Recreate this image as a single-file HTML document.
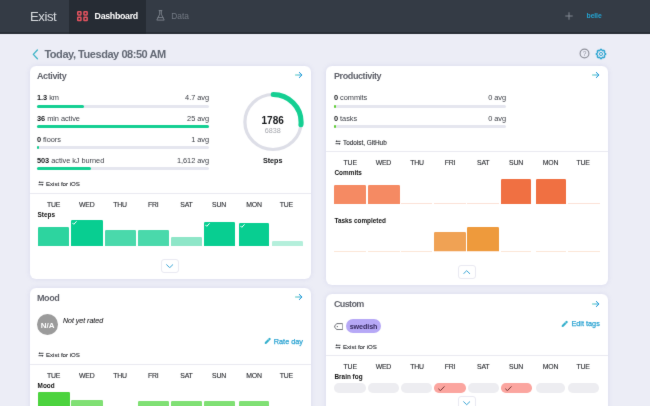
<!DOCTYPE html>
<html lang="en"><head><meta charset="utf-8"><title>Exist - Dashboard</title>
<style>
html,body{margin:0;padding:0;}
body{width:650px;height:406px;overflow:hidden;position:relative;background:#ecedf6;font-family:"Liberation Sans", sans-serif;-webkit-font-smoothing:antialiased;}
div,svg{position:absolute;}
b{font-weight:bold;}
</style></head><body>
<svg width="0" height="0" style="left:0;top:0"><defs><filter id="soft" x="0" y="0" width="100%" height="100%" color-interpolation-filters="sRGB"><feConvolveMatrix order="3" kernelMatrix="0.01 0.06 0.01 0.06 0.72 0.06 0.01 0.06 0.01" divisor="1" edgeMode="duplicate" preserveAlpha="false"/></filter></defs></svg>
<div id="w" style="left:-10px;top:-10px;width:670px;height:426px;filter:url(#soft);"><div id="p" style="left:10px;top:10px;width:650px;height:406px;">
<div style="position:absolute;left:-10.00px;top:-10.00px;width:670.00px;height:43.70px;background:#282e36;"></div>
<div style="position:absolute;left:-10.00px;top:-10.00px;width:670.00px;height:42.10px;background:#343b45;"></div>
<div style="position:absolute;left:69.20px;top:-10.00px;width:76.80px;height:43.70px;background:#21262d;"></div>
<div style="position:absolute;left:69.20px;top:-10.00px;width:76.80px;height:42.10px;background:#262c34;"></div>
<div style="top:9px;font-size:13.2px;line-height:15px;color:#d9dce0;white-space:nowrap;letter-spacing:-0.45px;left:30.00px;">Exist</div>
<svg style="position:absolute;left:77.40px;top:10.60px" width="11" height="11" viewBox="0 0 11 11"><rect x="0.75" y="0.75" width="3.2" height="3.2" rx="0.4" fill="none" stroke="#e5535f" stroke-width="1.5"/><rect x="6.95" y="0.75" width="3.2" height="3.2" rx="0.4" fill="none" stroke="#e5535f" stroke-width="1.5"/><rect x="0.75" y="6.35" width="3.2" height="3.2" rx="0.4" fill="none" stroke="#e5535f" stroke-width="1.5"/><rect x="6.95" y="6.35" width="3.2" height="3.2" rx="0.4" fill="none" stroke="#e5535f" stroke-width="1.5"/></svg>
<div style="top:11px;font-size:8.8px;line-height:10px;color:#fff;white-space:nowrap;font-weight:bold;letter-spacing:-0.3px;left:94.60px;">Dashboard</div>
<svg style="position:absolute;left:155.60px;top:10.00px" width="9" height="11" viewBox="0 0 9 11"><path d="M3.1 0.6h2.8M3.7 0.6v3.6L0.8 10.1h7.4L5.3 4.2V0.6M2 7.6h5" fill="none" stroke="#7f868f" stroke-width="0.9" stroke-linejoin="round" stroke-linecap="round"/></svg>
<div style="top:11px;font-size:8.4px;line-height:10px;color:#747b85;white-space:nowrap;left:171.20px;">Data</div>
<svg style="position:absolute;left:565.30px;top:11.70px" width="8" height="8" viewBox="0 0 8 8"><path d="M4 0.3v7.4M0.3 4h7.4" stroke="#8a9099" stroke-width="0.9" fill="none"/></svg>
<div style="top:12px;font-size:6.8px;line-height:7px;color:#24a4d2;white-space:nowrap;font-weight:bold;letter-spacing:-0.1px;left:586.60px;">belle</div>
<svg style="position:absolute;left:32.00px;top:48.60px" width="7" height="11" viewBox="0 0 7 11"><path d="M5.4 1L1.3 5.4L5.4 9.8" fill="none" stroke="#3db3c6" stroke-width="1.3" stroke-linecap="round" stroke-linejoin="round"/></svg>
<div style="top:48px;font-size:11px;line-height:12px;color:#626874;white-space:nowrap;font-weight:bold;letter-spacing:-0.45px;left:44.40px;">Today, Tuesday 08:50 AM</div>
<svg style="position:absolute;left:579.30px;top:48.30px" width="11" height="11" viewBox="0 0 11 11"><circle cx="5.5" cy="5.5" r="4.4" fill="none" stroke="#8f919b" stroke-width="1.15"/><text x="5.5" y="7.9" font-size="6.6" text-anchor="middle" fill="#8d8f99" font-family="Liberation Sans, sans-serif">?</text></svg>
<svg style="position:absolute;left:595.40px;top:47.70px" width="12" height="12" viewBox="0 0 12 12"><path d="M10.64 5.26L10.64 6.74L9.58 6.92L9.18 7.88L9.80 8.76L8.76 9.80L7.88 9.18L6.92 9.58L6.74 10.64L5.26 10.64L5.08 9.58L4.12 9.18L3.24 9.80L2.20 8.76L2.82 7.88L2.42 6.92L1.36 6.74L1.36 5.26L2.42 5.08L2.82 4.12L2.20 3.24L3.24 2.20L4.12 2.82L5.08 2.42L5.26 1.36L6.74 1.36L6.92 2.42L7.88 2.82L8.76 2.20L9.80 3.24L9.18 4.12L9.58 5.08Z" fill="none" stroke="#2ea5d1" stroke-width="1.25" stroke-linejoin="round"/><circle cx="6" cy="6" r="1.55" fill="none" stroke="#2ea5d1" stroke-width="0.95"/></svg>
<div style="position:absolute;left:30.00px;top:66.00px;width:281.00px;height:212.60px;background:#fff;border-radius:6px;box-shadow:0 0 5px rgba(120,120,190,0.16);"></div>
<div style="top:71px;font-size:9.0px;line-height:10px;color:#5e6069;white-space:nowrap;font-weight:bold;letter-spacing:-0.4px;left:37.00px;">Activity</div>
<svg style="position:absolute;left:294.90px;top:70.90px" width="8" height="8" viewBox="0 0 8 8"><defs><linearGradient id="ag" x1="0" x2="1" y1="0" y2="0"><stop offset="0" stop-color="#45c7b6"/><stop offset="0.7" stop-color="#2aa2d6"/></linearGradient></defs><path d="M0.5 4h6.2M4.3 1.4L7 4L4.3 6.6" fill="none" stroke="url(#ag)" stroke-width="0.95" stroke-linecap="round" stroke-linejoin="round"/><path d="M4.3 1.4L7 4L4.3 6.6" fill="none" stroke="#2a9fd8" stroke-width="0.95" stroke-linecap="round" stroke-linejoin="round"/></svg>
<div style="top:93px;font-size:7.4px;line-height:9px;color:#3e4148;white-space:nowrap;letter-spacing:-0.05px;left:37.00px;"><b style="color:#15171a">1.3</b> km</div>
<div style="top:93px;font-size:7.4px;line-height:9px;color:#3e4148;white-space:nowrap;letter-spacing:-0.05px;right:441.00px;">4.7 avg</div>
<div style="position:absolute;left:37.00px;top:104.50px;width:172.00px;height:3.00px;background:#e5e6ef;border-radius:1.5px;"></div>
<div style="position:absolute;left:37.00px;top:104.50px;width:47.13px;height:3.00px;background:#14cf92;border-radius:1.5px;"></div>
<div style="top:114px;font-size:7.4px;line-height:9px;color:#3e4148;white-space:nowrap;letter-spacing:-0.05px;left:37.00px;"><b style="color:#15171a">36</b> min active</div>
<div style="top:114px;font-size:7.4px;line-height:9px;color:#3e4148;white-space:nowrap;letter-spacing:-0.05px;right:441.00px;">25 avg</div>
<div style="position:absolute;left:37.00px;top:125.10px;width:172.00px;height:3.00px;background:#e5e6ef;border-radius:1.5px;"></div>
<div style="position:absolute;left:37.00px;top:125.10px;width:172.00px;height:3.00px;background:#14cf92;border-radius:1.5px;"></div>
<div style="top:135px;font-size:7.4px;line-height:9px;color:#3e4148;white-space:nowrap;letter-spacing:-0.05px;left:37.00px;"><b style="color:#15171a">0</b> floors</div>
<div style="top:135px;font-size:7.4px;line-height:9px;color:#3e4148;white-space:nowrap;letter-spacing:-0.05px;right:441.00px;">1 avg</div>
<div style="position:absolute;left:37.00px;top:145.90px;width:172.00px;height:3.00px;background:#e5e6ef;border-radius:1.5px;"></div>
<div style="position:absolute;left:37.00px;top:145.90px;width:2.20px;height:3.00px;background:#14cf92;border-radius:1.5px;"></div>
<div style="top:156px;font-size:7.4px;line-height:9px;color:#3e4148;white-space:nowrap;letter-spacing:-0.05px;left:37.00px;"><b style="color:#15171a">503</b> active kJ burned</div>
<div style="top:156px;font-size:7.4px;line-height:9px;color:#3e4148;white-space:nowrap;letter-spacing:-0.05px;right:441.00px;">1,612 avg</div>
<div style="position:absolute;left:37.00px;top:167.10px;width:172.00px;height:3.00px;background:#e5e6ef;border-radius:1.5px;"></div>
<div style="position:absolute;left:37.00px;top:167.10px;width:53.84px;height:3.00px;background:#14cf92;border-radius:1.5px;"></div>
<svg style="position:absolute;left:237.70px;top:87.30px" width="70" height="70" viewBox="0 0 70 70"><g transform="translate(35 35) scale(1.022 1) translate(-35 -35)"><circle cx="35" cy="35" r="27.5" fill="none" stroke="#dddee7" stroke-width="3.2"/><circle cx="35" cy="35" r="27.5" fill="none" stroke="#14cf92" stroke-width="5" stroke-linecap="round" stroke-dasharray="45.73 172.79" transform="rotate(-89.5 35 35)"/></g></svg>
<div style="top:115px;font-size:10px;line-height:11px;color:#15171a;white-space:nowrap;font-weight:bold;left:172.70px;width:200px;text-align:center;">1786</div>
<div style="top:126px;font-size:7.2px;line-height:9px;color:#a5a7ad;white-space:nowrap;left:172.70px;width:200px;text-align:center;">6838</div>
<div style="top:156px;font-size:7.2px;line-height:9px;color:#15171a;white-space:nowrap;font-weight:bold;left:172.70px;width:200px;text-align:center;">Steps</div>
<svg style="position:absolute;left:37.80px;top:181.30px" width="6" height="5" viewBox="0 0 6 5"><path d="M1.6 1.3h3.9M0.5 3.7h3.9" fill="none" stroke="#2b2d33" stroke-width="0.85"/><path d="M0.4 1.3L2 0.3V2.3Z M5.6 3.7L4 2.7V4.7Z" fill="#2b2d33"/></svg>
<div style="top:180px;font-size:6.1px;line-height:7px;color:#26282d;white-space:nowrap;left:46.00px;-webkit-text-stroke:0.1px #26282d;">Exist for iOS</div>
<div style="position:absolute;left:30.00px;top:193.20px;width:281.00px;height:0.80px;background:#e9eaf1;"></div>
<div style="top:201px;font-size:6.9px;line-height:7px;color:#2c2e33;white-space:nowrap;letter-spacing:-0.2px;left:-46.40px;width:200px;text-align:center;-webkit-text-stroke:0.12px #2c2e33;">TUE</div>
<div style="top:201px;font-size:6.9px;line-height:7px;color:#2c2e33;white-space:nowrap;letter-spacing:-0.2px;left:-13.20px;width:200px;text-align:center;-webkit-text-stroke:0.12px #2c2e33;">WED</div>
<div style="top:201px;font-size:6.9px;line-height:7px;color:#2c2e33;white-space:nowrap;letter-spacing:-0.2px;left:20.00px;width:200px;text-align:center;-webkit-text-stroke:0.12px #2c2e33;">THU</div>
<div style="top:201px;font-size:6.9px;line-height:7px;color:#2c2e33;white-space:nowrap;letter-spacing:-0.2px;left:53.30px;width:200px;text-align:center;-webkit-text-stroke:0.12px #2c2e33;">FRI</div>
<div style="top:201px;font-size:6.9px;line-height:7px;color:#2c2e33;white-space:nowrap;letter-spacing:-0.2px;left:86.40px;width:200px;text-align:center;-webkit-text-stroke:0.12px #2c2e33;">SAT</div>
<div style="top:201px;font-size:6.9px;line-height:7px;color:#2c2e33;white-space:nowrap;letter-spacing:-0.2px;left:119.00px;width:200px;text-align:center;-webkit-text-stroke:0.12px #2c2e33;">SUN</div>
<div style="top:201px;font-size:6.9px;line-height:7px;color:#2c2e33;white-space:nowrap;letter-spacing:-0.2px;left:154.00px;width:200px;text-align:center;-webkit-text-stroke:0.12px #2c2e33;">MON</div>
<div style="top:201px;font-size:6.9px;line-height:7px;color:#2c2e33;white-space:nowrap;letter-spacing:-0.2px;left:186.30px;width:200px;text-align:center;-webkit-text-stroke:0.12px #2c2e33;">TUE</div>
<div style="top:211px;font-size:6.4px;line-height:7px;color:#111;white-space:nowrap;font-weight:bold;left:37.60px;">Steps</div>
<div style="position:absolute;left:37.60px;top:227.00px;width:31.40px;height:18.60px;background:#2dd49f;border-radius:1.2px 1.2px 0 0;"></div>
<div style="position:absolute;left:71.00px;top:220.00px;width:32.00px;height:25.60px;background:#08ce91;border-radius:1.2px 1.2px 0 0;"></div>
<div style="position:absolute;left:104.60px;top:229.60px;width:31.40px;height:16.00px;background:#4ad9ab;border-radius:1.2px 1.2px 0 0;"></div>
<div style="position:absolute;left:137.90px;top:229.70px;width:31.60px;height:15.90px;background:#4ad9ab;border-radius:1.2px 1.2px 0 0;"></div>
<div style="position:absolute;left:170.90px;top:236.70px;width:31.60px;height:8.90px;background:#8ee6c8;border-radius:1.2px 1.2px 0 0;"></div>
<div style="position:absolute;left:204.00px;top:222.00px;width:30.70px;height:23.60px;background:#08ce91;border-radius:1.2px 1.2px 0 0;"></div>
<div style="position:absolute;left:239.00px;top:222.60px;width:30.20px;height:23.00px;background:#08ce91;border-radius:1.2px 1.2px 0 0;"></div>
<div style="position:absolute;left:271.50px;top:240.80px;width:31.00px;height:4.80px;background:#b4efdb;border-radius:1.2px 1.2px 0 0;"></div>
<svg style="position:absolute;left:72.00px;top:221.30px" width="5" height="4" viewBox="0 0 5 4"><path d="M0.6 2.1L1.8 3.3L4.3 0.6" fill="none" stroke="#fff" stroke-width="1.0" stroke-linecap="round" stroke-linejoin="round"/></svg>
<svg style="position:absolute;left:205.00px;top:223.30px" width="5" height="4" viewBox="0 0 5 4"><path d="M0.6 2.1L1.8 3.3L4.3 0.6" fill="none" stroke="#fff" stroke-width="1.0" stroke-linecap="round" stroke-linejoin="round"/></svg>
<svg style="position:absolute;left:240.00px;top:223.90px" width="5" height="4" viewBox="0 0 5 4"><path d="M0.6 2.1L1.8 3.3L4.3 0.6" fill="none" stroke="#fff" stroke-width="1.0" stroke-linecap="round" stroke-linejoin="round"/></svg>
<div style="position:absolute;left:161.00px;top:259.10px;width:18.00px;height:13.60px;background:#fff;border:0.8px solid #e9e9f2;border-radius:3px;box-sizing:border-box;"></div>
<svg style="position:absolute;left:166.30px;top:264.10px" width="7.4" height="4.4" viewBox="0 0 7.4 4.4"><path d="M0.6 0.7L3.7 3.7L6.8 0.7" fill="none" stroke="#2d9fd2" stroke-width="0.95" stroke-linecap="round" stroke-linejoin="round"/></svg>
<div style="position:absolute;left:326.00px;top:66.00px;width:282.00px;height:218.80px;background:#fff;border-radius:6px;box-shadow:0 0 5px rgba(120,120,190,0.16);"></div>
<div style="top:71px;font-size:9.0px;line-height:10px;color:#5e6069;white-space:nowrap;font-weight:bold;letter-spacing:-0.4px;left:334.00px;">Productivity</div>
<svg style="position:absolute;left:591.80px;top:70.90px" width="8" height="8" viewBox="0 0 8 8"><defs><linearGradient id="ag" x1="0" x2="1" y1="0" y2="0"><stop offset="0" stop-color="#45c7b6"/><stop offset="0.7" stop-color="#2aa2d6"/></linearGradient></defs><path d="M0.5 4h6.2M4.3 1.4L7 4L4.3 6.6" fill="none" stroke="url(#ag)" stroke-width="0.95" stroke-linecap="round" stroke-linejoin="round"/><path d="M4.3 1.4L7 4L4.3 6.6" fill="none" stroke="#2a9fd8" stroke-width="0.95" stroke-linecap="round" stroke-linejoin="round"/></svg>
<div style="top:93px;font-size:7.4px;line-height:9px;color:#3e4148;white-space:nowrap;letter-spacing:-0.05px;left:334.00px;"><b style="color:#15171a">0</b> commits</div>
<div style="top:93px;font-size:7.4px;line-height:9px;color:#3e4148;white-space:nowrap;letter-spacing:-0.05px;right:144.00px;">0 avg</div>
<div style="position:absolute;left:334.00px;top:104.50px;width:172.00px;height:3.00px;background:#e5e6ef;border-radius:1.5px;"></div>
<div style="position:absolute;left:334.00px;top:104.50px;width:2.20px;height:3.00px;background:#5fd035;border-radius:1.5px;"></div>
<div style="top:114px;font-size:7.4px;line-height:9px;color:#3e4148;white-space:nowrap;letter-spacing:-0.05px;left:334.00px;"><b style="color:#15171a">0</b> tasks</div>
<div style="top:114px;font-size:7.4px;line-height:9px;color:#3e4148;white-space:nowrap;letter-spacing:-0.05px;right:144.00px;">0 avg</div>
<div style="position:absolute;left:334.00px;top:125.10px;width:172.00px;height:3.00px;background:#e5e6ef;border-radius:1.5px;"></div>
<div style="position:absolute;left:334.00px;top:125.10px;width:2.20px;height:3.00px;background:#5fd035;border-radius:1.5px;"></div>
<svg style="position:absolute;left:334.80px;top:140.30px" width="6" height="5" viewBox="0 0 6 5"><path d="M1.6 1.3h3.9M0.5 3.7h3.9" fill="none" stroke="#2b2d33" stroke-width="0.85"/><path d="M0.4 1.3L2 0.3V2.3Z M5.6 3.7L4 2.7V4.7Z" fill="#2b2d33"/></svg>
<div style="top:139px;font-size:6.4px;line-height:7px;color:#26282d;white-space:nowrap;left:343.00px;-webkit-text-stroke:0.1px #26282d;">Todoist, GitHub</div>
<div style="position:absolute;left:326.00px;top:150.60px;width:282.00px;height:0.80px;background:#e9eaf1;"></div>
<div style="top:159px;font-size:6.9px;line-height:7px;color:#2c2e33;white-space:nowrap;letter-spacing:-0.2px;left:250.20px;width:200px;text-align:center;-webkit-text-stroke:0.12px #2c2e33;">TUE</div>
<div style="top:159px;font-size:6.9px;line-height:7px;color:#2c2e33;white-space:nowrap;letter-spacing:-0.2px;left:283.40px;width:200px;text-align:center;-webkit-text-stroke:0.12px #2c2e33;">WED</div>
<div style="top:159px;font-size:6.9px;line-height:7px;color:#2c2e33;white-space:nowrap;letter-spacing:-0.2px;left:317.00px;width:200px;text-align:center;-webkit-text-stroke:0.12px #2c2e33;">THU</div>
<div style="top:159px;font-size:6.9px;line-height:7px;color:#2c2e33;white-space:nowrap;letter-spacing:-0.2px;left:350.00px;width:200px;text-align:center;-webkit-text-stroke:0.12px #2c2e33;">FRI</div>
<div style="top:159px;font-size:6.9px;line-height:7px;color:#2c2e33;white-space:nowrap;letter-spacing:-0.2px;left:383.20px;width:200px;text-align:center;-webkit-text-stroke:0.12px #2c2e33;">SAT</div>
<div style="top:159px;font-size:6.9px;line-height:7px;color:#2c2e33;white-space:nowrap;letter-spacing:-0.2px;left:416.00px;width:200px;text-align:center;-webkit-text-stroke:0.12px #2c2e33;">SUN</div>
<div style="top:159px;font-size:6.9px;line-height:7px;color:#2c2e33;white-space:nowrap;letter-spacing:-0.2px;left:450.50px;width:200px;text-align:center;-webkit-text-stroke:0.12px #2c2e33;">MON</div>
<div style="top:159px;font-size:6.9px;line-height:7px;color:#2c2e33;white-space:nowrap;letter-spacing:-0.2px;left:483.00px;width:200px;text-align:center;-webkit-text-stroke:0.12px #2c2e33;">TUE</div>
<div style="top:169px;font-size:6.4px;line-height:7px;color:#111;white-space:nowrap;font-weight:bold;left:334.50px;">Commits</div>
<div style="position:absolute;left:334.40px;top:203.00px;width:31.20px;height:0.80px;background:#fce1d6;"></div>
<div style="position:absolute;left:367.60px;top:203.00px;width:32.00px;height:0.80px;background:#fce1d6;"></div>
<div style="position:absolute;left:401.00px;top:203.00px;width:31.40px;height:0.80px;background:#fce1d6;"></div>
<div style="position:absolute;left:434.00px;top:203.00px;width:31.70px;height:0.80px;background:#fce1d6;"></div>
<div style="position:absolute;left:467.40px;top:203.00px;width:31.60px;height:0.80px;background:#fce1d6;"></div>
<div style="position:absolute;left:500.50px;top:203.00px;width:30.70px;height:0.80px;background:#fce1d6;"></div>
<div style="position:absolute;left:535.80px;top:203.00px;width:30.20px;height:0.80px;background:#fce1d6;"></div>
<div style="position:absolute;left:568.00px;top:203.00px;width:31.60px;height:0.80px;background:#fce1d6;"></div>
<div style="position:absolute;left:334.40px;top:185.40px;width:31.20px;height:18.40px;background:#f58a63;border-radius:1.2px 1.2px 0 0;"></div>
<div style="position:absolute;left:367.60px;top:185.40px;width:32.00px;height:18.40px;background:#f58a63;border-radius:1.2px 1.2px 0 0;"></div>
<div style="position:absolute;left:500.50px;top:178.70px;width:30.70px;height:25.10px;background:#f07042;border-radius:1.2px 1.2px 0 0;"></div>
<div style="position:absolute;left:535.80px;top:178.70px;width:30.20px;height:25.10px;background:#f07042;border-radius:1.2px 1.2px 0 0;"></div>
<div style="top:217px;font-size:6.4px;line-height:7px;color:#111;white-space:nowrap;font-weight:bold;left:334.50px;">Tasks completed</div>
<div style="position:absolute;left:334.40px;top:250.50px;width:31.20px;height:0.80px;background:#fce6d6;"></div>
<div style="position:absolute;left:367.60px;top:250.50px;width:32.00px;height:0.80px;background:#fce6d6;"></div>
<div style="position:absolute;left:401.00px;top:250.50px;width:31.40px;height:0.80px;background:#fce6d6;"></div>
<div style="position:absolute;left:434.00px;top:250.50px;width:31.70px;height:0.80px;background:#fce6d6;"></div>
<div style="position:absolute;left:467.40px;top:250.50px;width:31.60px;height:0.80px;background:#fce6d6;"></div>
<div style="position:absolute;left:500.50px;top:250.50px;width:30.70px;height:0.80px;background:#fce6d6;"></div>
<div style="position:absolute;left:535.80px;top:250.50px;width:30.20px;height:0.80px;background:#fce6d6;"></div>
<div style="position:absolute;left:568.00px;top:250.50px;width:31.60px;height:0.80px;background:#fce6d6;"></div>
<div style="position:absolute;left:434.00px;top:231.50px;width:31.70px;height:19.80px;background:#f0a254;border-radius:1.2px 1.2px 0 0;"></div>
<div style="position:absolute;left:467.40px;top:226.60px;width:31.60px;height:24.70px;background:#ee9a3c;border-radius:1.2px 1.2px 0 0;"></div>
<div style="position:absolute;left:457.50px;top:265.00px;width:18.00px;height:13.60px;background:#fff;border:0.8px solid #e9e9f2;border-radius:3px;box-sizing:border-box;"></div>
<svg style="position:absolute;left:462.80px;top:270.00px" width="7.4" height="4.4" viewBox="0 0 7.4 4.4"><path d="M0.6 3.7L3.7 0.7L6.8 3.7" fill="none" stroke="#2d9fd2" stroke-width="0.95" stroke-linecap="round" stroke-linejoin="round"/></svg>
<div style="position:absolute;left:30.00px;top:288.00px;width:281.00px;height:132.00px;background:#fff;border-radius:6px 6px 0 0;box-shadow:0 0 5px rgba(120,120,190,0.16);"></div>
<div style="top:293px;font-size:9.0px;line-height:10px;color:#5e6069;white-space:nowrap;font-weight:bold;letter-spacing:-0.4px;left:37.00px;">Mood</div>
<svg style="position:absolute;left:294.90px;top:293.00px" width="8" height="8" viewBox="0 0 8 8"><defs><linearGradient id="ag" x1="0" x2="1" y1="0" y2="0"><stop offset="0" stop-color="#45c7b6"/><stop offset="0.7" stop-color="#2aa2d6"/></linearGradient></defs><path d="M0.5 4h6.2M4.3 1.4L7 4L4.3 6.6" fill="none" stroke="url(#ag)" stroke-width="0.95" stroke-linecap="round" stroke-linejoin="round"/><path d="M4.3 1.4L7 4L4.3 6.6" fill="none" stroke="#2a9fd8" stroke-width="0.95" stroke-linecap="round" stroke-linejoin="round"/></svg>
<div style="position:absolute;left:37.00px;top:314.30px;width:21.00px;height:21.00px;background:#9b9b9b;border-radius:50%;"></div>
<div style="top:321px;font-size:8px;line-height:9px;color:#fff;white-space:nowrap;font-weight:bold;letter-spacing:-0.1px;left:-52.40px;width:200px;text-align:center;">N/A</div>
<div style="top:317px;font-size:7px;line-height:7px;color:#1c1c1f;white-space:nowrap;font-style:italic;left:63.00px;-webkit-text-stroke:0.1px #1c1c1f;">Not yet rated</div>
<svg style="position:absolute;left:264.00px;top:337.40px" width="7.6" height="7.6" viewBox="0 0 7.6 7.6"><path d="M1.9 5.7L5.6 2" stroke="#35b0cd" stroke-width="2.3" stroke-linecap="round" fill="none"/><path d="M3.9 2.1L5.5 3.7" stroke="#fff" stroke-width="0.45" fill="none"/><path d="M0.7 6.9L1.2 5.3L2.3 6.4Z" fill="#35b0cd"/></svg>
<div style="top:337px;font-size:7.3px;line-height:9px;color:#2aa3d2;white-space:nowrap;right:347.00px;-webkit-text-stroke:0.25px #2aa3d2;">Rate day</div>
<svg style="position:absolute;left:37.80px;top:352.30px" width="6" height="5" viewBox="0 0 6 5"><path d="M1.6 1.3h3.9M0.5 3.7h3.9" fill="none" stroke="#2b2d33" stroke-width="0.85"/><path d="M0.4 1.3L2 0.3V2.3Z M5.6 3.7L4 2.7V4.7Z" fill="#2b2d33"/></svg>
<div style="top:351px;font-size:6.1px;line-height:7px;color:#26282d;white-space:nowrap;left:46.00px;-webkit-text-stroke:0.1px #26282d;">Exist for iOS</div>
<div style="position:absolute;left:30.00px;top:364.20px;width:281.00px;height:0.80px;background:#e9eaf1;"></div>
<div style="top:372px;font-size:6.9px;line-height:7px;color:#2c2e33;white-space:nowrap;letter-spacing:-0.2px;left:-46.40px;width:200px;text-align:center;-webkit-text-stroke:0.12px #2c2e33;">TUE</div>
<div style="top:372px;font-size:6.9px;line-height:7px;color:#2c2e33;white-space:nowrap;letter-spacing:-0.2px;left:-13.20px;width:200px;text-align:center;-webkit-text-stroke:0.12px #2c2e33;">WED</div>
<div style="top:372px;font-size:6.9px;line-height:7px;color:#2c2e33;white-space:nowrap;letter-spacing:-0.2px;left:20.00px;width:200px;text-align:center;-webkit-text-stroke:0.12px #2c2e33;">THU</div>
<div style="top:372px;font-size:6.9px;line-height:7px;color:#2c2e33;white-space:nowrap;letter-spacing:-0.2px;left:53.30px;width:200px;text-align:center;-webkit-text-stroke:0.12px #2c2e33;">FRI</div>
<div style="top:372px;font-size:6.9px;line-height:7px;color:#2c2e33;white-space:nowrap;letter-spacing:-0.2px;left:86.40px;width:200px;text-align:center;-webkit-text-stroke:0.12px #2c2e33;">SAT</div>
<div style="top:372px;font-size:6.9px;line-height:7px;color:#2c2e33;white-space:nowrap;letter-spacing:-0.2px;left:119.00px;width:200px;text-align:center;-webkit-text-stroke:0.12px #2c2e33;">SUN</div>
<div style="top:372px;font-size:6.9px;line-height:7px;color:#2c2e33;white-space:nowrap;letter-spacing:-0.2px;left:154.00px;width:200px;text-align:center;-webkit-text-stroke:0.12px #2c2e33;">MON</div>
<div style="top:372px;font-size:6.9px;line-height:7px;color:#2c2e33;white-space:nowrap;letter-spacing:-0.2px;left:186.30px;width:200px;text-align:center;-webkit-text-stroke:0.12px #2c2e33;">TUE</div>
<div style="top:382px;font-size:6.4px;line-height:7px;color:#111;white-space:nowrap;font-weight:bold;left:37.60px;">Mood</div>
<div style="position:absolute;left:37.60px;top:392.00px;width:32.00px;height:18.00px;background:#4cd33e;border-radius:1.2px 1.2px 0 0;"></div>
<div style="position:absolute;left:71.00px;top:400.40px;width:32.00px;height:9.60px;background:#80e074;border-radius:1.2px 1.2px 0 0;"></div>
<div style="position:absolute;left:137.90px;top:400.50px;width:31.60px;height:9.50px;background:#80e074;border-radius:1.2px 1.2px 0 0;"></div>
<div style="position:absolute;left:170.90px;top:400.50px;width:31.60px;height:9.50px;background:#80e074;border-radius:1.2px 1.2px 0 0;"></div>
<div style="position:absolute;left:204.00px;top:400.50px;width:30.70px;height:9.50px;background:#80e074;border-radius:1.2px 1.2px 0 0;"></div>
<div style="position:absolute;left:239.00px;top:400.50px;width:30.20px;height:9.50px;background:#80e074;border-radius:1.2px 1.2px 0 0;"></div>
<div style="position:absolute;left:326.00px;top:294.40px;width:282.00px;height:125.60px;background:#fff;border-radius:6px 6px 0 0;box-shadow:0 0 5px rgba(120,120,190,0.16);"></div>
<div style="top:299px;font-size:9.0px;line-height:10px;color:#5e6069;white-space:nowrap;font-weight:bold;letter-spacing:-0.65px;left:334.00px;">Custom</div>
<svg style="position:absolute;left:591.80px;top:299.50px" width="8" height="8" viewBox="0 0 8 8"><defs><linearGradient id="ag" x1="0" x2="1" y1="0" y2="0"><stop offset="0" stop-color="#45c7b6"/><stop offset="0.7" stop-color="#2aa2d6"/></linearGradient></defs><path d="M0.5 4h6.2M4.3 1.4L7 4L4.3 6.6" fill="none" stroke="url(#ag)" stroke-width="0.95" stroke-linecap="round" stroke-linejoin="round"/><path d="M4.3 1.4L7 4L4.3 6.6" fill="none" stroke="#2a9fd8" stroke-width="0.95" stroke-linecap="round" stroke-linejoin="round"/></svg>
<svg style="position:absolute;left:333.80px;top:322.60px" width="9.6" height="7.2" viewBox="0 0 9.6 7.2"><path d="M2.7 0.6h5.4a0.8 0.8 0 0 1 0.8 0.8v4.4a0.8 0.8 0 0 1 -0.8 0.8H2.7L0.7 4.2V3Z" fill="none" stroke="#4a4d55" stroke-width="0.8" stroke-linejoin="round"/><circle cx="3.3" cy="3.6" r="0.6" fill="#4a4d55"/></svg>
<div style="position:absolute;left:345.60px;top:319.00px;width:35.80px;height:14.00px;background:#b6a8f6;border-radius:7px;"></div>
<div style="top:322px;font-size:7.2px;line-height:9px;color:#35295f;white-space:nowrap;font-weight:bold;letter-spacing:-0.1px;left:263.50px;width:200px;text-align:center;">swedish</div>
<svg style="position:absolute;left:561.40px;top:319.60px" width="7.6" height="7.6" viewBox="0 0 7.6 7.6"><path d="M1.9 5.7L5.6 2" stroke="#35b0cd" stroke-width="2.3" stroke-linecap="round" fill="none"/><path d="M3.9 2.1L5.5 3.7" stroke="#fff" stroke-width="0.45" fill="none"/><path d="M0.7 6.9L1.2 5.3L2.3 6.4Z" fill="#35b0cd"/></svg>
<div style="top:319px;font-size:7.3px;line-height:9px;color:#2aa3d2;white-space:nowrap;right:50.20px;-webkit-text-stroke:0.25px #2aa3d2;">Edit tags</div>
<svg style="position:absolute;left:334.80px;top:344.30px" width="6" height="5" viewBox="0 0 6 5"><path d="M1.6 1.3h3.9M0.5 3.7h3.9" fill="none" stroke="#2b2d33" stroke-width="0.85"/><path d="M0.4 1.3L2 0.3V2.3Z M5.6 3.7L4 2.7V4.7Z" fill="#2b2d33"/></svg>
<div style="top:343px;font-size:6.1px;line-height:7px;color:#26282d;white-space:nowrap;left:343.00px;-webkit-text-stroke:0.1px #26282d;">Exist for iOS</div>
<div style="position:absolute;left:326.00px;top:354.60px;width:282.00px;height:0.80px;background:#e9eaf1;"></div>
<div style="top:363px;font-size:6.9px;line-height:7px;color:#2c2e33;white-space:nowrap;letter-spacing:-0.2px;left:250.20px;width:200px;text-align:center;-webkit-text-stroke:0.12px #2c2e33;">TUE</div>
<div style="top:363px;font-size:6.9px;line-height:7px;color:#2c2e33;white-space:nowrap;letter-spacing:-0.2px;left:283.40px;width:200px;text-align:center;-webkit-text-stroke:0.12px #2c2e33;">WED</div>
<div style="top:363px;font-size:6.9px;line-height:7px;color:#2c2e33;white-space:nowrap;letter-spacing:-0.2px;left:317.00px;width:200px;text-align:center;-webkit-text-stroke:0.12px #2c2e33;">THU</div>
<div style="top:363px;font-size:6.9px;line-height:7px;color:#2c2e33;white-space:nowrap;letter-spacing:-0.2px;left:350.00px;width:200px;text-align:center;-webkit-text-stroke:0.12px #2c2e33;">FRI</div>
<div style="top:363px;font-size:6.9px;line-height:7px;color:#2c2e33;white-space:nowrap;letter-spacing:-0.2px;left:383.20px;width:200px;text-align:center;-webkit-text-stroke:0.12px #2c2e33;">SAT</div>
<div style="top:363px;font-size:6.9px;line-height:7px;color:#2c2e33;white-space:nowrap;letter-spacing:-0.2px;left:416.00px;width:200px;text-align:center;-webkit-text-stroke:0.12px #2c2e33;">SUN</div>
<div style="top:363px;font-size:6.9px;line-height:7px;color:#2c2e33;white-space:nowrap;letter-spacing:-0.2px;left:450.50px;width:200px;text-align:center;-webkit-text-stroke:0.12px #2c2e33;">MON</div>
<div style="top:363px;font-size:6.9px;line-height:7px;color:#2c2e33;white-space:nowrap;letter-spacing:-0.2px;left:483.00px;width:200px;text-align:center;-webkit-text-stroke:0.12px #2c2e33;">TUE</div>
<div style="top:373px;font-size:6.4px;line-height:7px;color:#111;white-space:nowrap;font-weight:bold;left:334.50px;">Brain fog</div>
<div style="position:absolute;left:334.40px;top:383.30px;width:31.60px;height:9.50px;background:#ededf1;border-radius:4.8px;"></div>
<div style="position:absolute;left:368.00px;top:383.30px;width:31.00px;height:9.50px;background:#ededf1;border-radius:4.8px;"></div>
<div style="position:absolute;left:401.40px;top:383.30px;width:31.00px;height:9.50px;background:#ededf1;border-radius:4.8px;"></div>
<div style="position:absolute;left:434.00px;top:383.30px;width:32.30px;height:9.50px;background:#fba59f;border-radius:4.8px;"></div>
<div style="position:absolute;left:468.00px;top:383.30px;width:30.70px;height:9.50px;background:#ededf1;border-radius:4.8px;"></div>
<div style="position:absolute;left:500.50px;top:383.30px;width:31.00px;height:9.50px;background:#fba59f;border-radius:4.8px;"></div>
<div style="position:absolute;left:535.80px;top:383.30px;width:29.60px;height:9.50px;background:#ededf1;border-radius:4.8px;"></div>
<div style="position:absolute;left:568.00px;top:383.30px;width:31.00px;height:9.50px;background:#ededf1;border-radius:4.8px;"></div>
<svg style="position:absolute;left:438.30px;top:385.60px" width="7" height="5.4" viewBox="0 0 7 5.4"><path d="M0.6 3L2.4 4.7L6.2 0.7" fill="none" stroke="#6b2e2c" stroke-width="0.95" stroke-linecap="round" stroke-linejoin="round"/></svg>
<svg style="position:absolute;left:504.80px;top:385.60px" width="7" height="5.4" viewBox="0 0 7 5.4"><path d="M0.6 3L2.4 4.7L6.2 0.7" fill="none" stroke="#6b2e2c" stroke-width="0.95" stroke-linecap="round" stroke-linejoin="round"/></svg>
<div style="position:absolute;left:457.70px;top:396.30px;width:18.00px;height:15.70px;background:#fff;border:0.8px solid #e9e9f2;border-radius:3px;box-sizing:border-box;"></div>
<svg style="position:absolute;left:463.00px;top:401.30px" width="7.4" height="4.4" viewBox="0 0 7.4 4.4"><path d="M0.6 0.7L3.7 3.7L6.8 0.7" fill="none" stroke="#2d9fd2" stroke-width="0.95" stroke-linecap="round" stroke-linejoin="round"/></svg>
</div></div>
</body></html>
